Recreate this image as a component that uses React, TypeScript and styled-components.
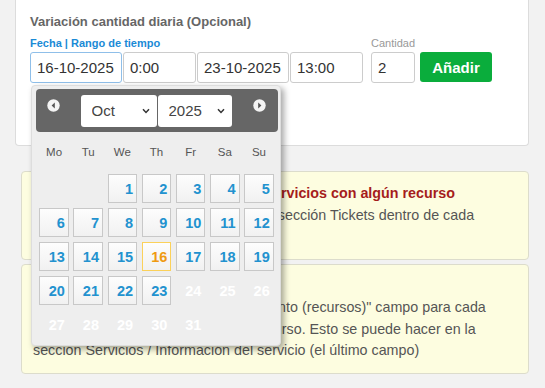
import React from 'react';
import styled, { createGlobalStyle } from 'styled-components';

const GlobalStyle = createGlobalStyle`
  html, body { margin: 0; padding: 0; background: #f2f2f2; }
  body {
    font-family: "Liberation Sans", Arial, sans-serif;
    width: 545px;
    height: 388px;
    overflow: hidden;
  }
  * { box-sizing: border-box; }
`;

const Page = styled.div`
  display: flex;
  flex-direction: column;
  padding: 0 16px 0 15px;
`;

const Panel = styled.section`
  position: relative;
  background: #fff;
  border: 1px solid #dcdcdc;
  border-top: none;
  border-radius: 0 0 4px 4px;
  padding: 12px 14px 62px 14px;
`;

const Title = styled.h3`
  margin: 0;
  font-size: 13px;
  line-height: 20px;
  font-weight: bold;
  color: #666;
`;

const FieldRow = styled.div`
  display: flex;
  align-items: flex-end;
  margin-top: 4px;
`;

const Group = styled.div<{ $gap?: number }>`
  display: flex;
  flex-direction: column;
  margin-left: ${(p) => p.$gap ?? 0}px;
`;

const Label = styled.label<{ $accent?: boolean }>`
  font-size: 11px;
  line-height: 14px;
  margin-bottom: 2px;
  font-weight: ${(p) => (p.$accent ? 'bold' : 'normal')};
  color: ${(p) => (p.$accent ? '#1a8ad6' : '#999')};
`;

const InputRow = styled.div`
  position: relative;
  display: flex;
  gap: 1px;
`;

const TextInput = styled.input<{ $w: number; $focus?: boolean }>`
  width: ${(p) => p.$w}px;
  height: 31px;
  border: 1px solid ${(p) => (p.$focus ? '#8fbfe9' : '#ccc')};
  border-radius: 3px;
  padding: 0 6px;
  font-family: "Liberation Sans", Arial, sans-serif;
  font-size: 15px;
  color: #333;
  background: #fff;
  outline: none;
`;

const AddButton = styled.button`
  margin-left: 5px;
  margin-bottom: 1px;
  width: 72px;
  height: 30px;
  border: none;
  border-radius: 3px;
  background: #0aad3c;
  color: #fff;
  font-family: "Liberation Sans", Arial, sans-serif;
  font-weight: bold;
  font-size: 15px;
`;

const Picker = styled.div`
  position: absolute;
  top: 33px;
  left: 1px;
  width: 250px;
  z-index: 10;
  background: #eee;
  border: 1px solid #ddd;
  border-radius: 4px;
  box-shadow: 3px 3px 6px rgba(0, 0, 0, 0.35);
  padding: 3px 2px 5.6px 4px;
`;

const PickerHeader = styled.div`
  height: 43px;
  background: #666;
  border-radius: 4px;
  display: flex;
  align-items: center;
  justify-content: space-between;
  padding: 0 12.5px 0 10.5px;
`;

const NavIcon = styled.svg`
  align-self: flex-start;
  margin-top: 10px;
  width: 13px;
  height: 13px;
`;

const Selects = styled.div`
  display: flex;
  gap: 1px;
`;

const SelectWrap = styled.div<{ $w: number }>`
  position: relative;
  width: ${(p) => p.$w}px;
  height: 32px;
`;

const Select = styled.select`
  appearance: none;
  -webkit-appearance: none;
  width: 100%;
  height: 100%;
  border: none;
  border-radius: 3px;
  background: #fff;
  padding: 0 0 0 11px;
  font-family: "Liberation Sans", Arial, sans-serif;
  font-size: 15px;
  color: #444;
  outline: none;
`;

const Chevron = styled.svg`
  position: absolute;
  right: 7px;
  top: 13px;
  width: 8px;
  height: 6px;
  pointer-events: none;
`;

const WeekRow = styled.div`
  display: grid;
  grid-template-columns: repeat(7, 29.5px);
  column-gap: 4.67px;
  margin-left: 3.3px;
  height: 40px;
  margin-bottom: 2px;
  align-items: center;
`;

const WeekDay = styled.span`
  text-align: center;
  font-size: 11.5px;
  color: #555;
`;

const DayGrid = styled.div`
  display: grid;
  grid-template-columns: repeat(7, 29.5px);
  grid-auto-rows: 29.4px;
  column-gap: 4.67px;
  row-gap: 4.6px;
  margin-left: 3.3px;
`;

type DayKind = 'normal' | 'today' | 'muted' | 'empty';

const Day = styled.span<{ $kind: DayKind }>`
  display: flex;
  align-items: center;
  justify-content: flex-end;
  padding-right: 3px;
  font-weight: bold;
  font-size: 14.5px;
  border: 1px solid
    ${(p) =>
      p.$kind === 'today' ? '#fbd15a' : p.$kind === 'normal' ? '#c8c8c8' : 'transparent'};
  background: ${(p) =>
    p.$kind === 'normal' || p.$kind === 'today'
      ? 'linear-gradient(#fdfdfd, #f1f1f1)'
      : 'transparent'};
  color: ${(p) =>
    p.$kind === 'today' ? '#ef9a12' : p.$kind === 'muted' ? '#fff' : '#2292cf'};
`;

const Notice = styled.div<{ $top: number }>`
  margin-left: 6px;
  margin-top: ${(p) => p.$top}px;
  background: #fdfde0;
  border: 1px solid #dcdccc;
  border-radius: 4px;
  padding: 11px;
  font-size: 14.3px;
  line-height: 21.5px;
  color: #555;
`;

const NoticeTitle = styled.strong`
  display: block;
  color: #a51c1c;
`;

const weekDays = ['Mo', 'Tu', 'We', 'Th', 'Fr', 'Sa', 'Su'];

function buildDays(): { label: string; kind: DayKind }[] {
  const cells: { label: string; kind: DayKind }[] = [];
  cells.push({ label: '', kind: 'empty' }, { label: '', kind: 'empty' });
  for (let d = 1; d <= 31; d++) {
    let kind: DayKind = 'normal';
    if (d === 16) kind = 'today';
    if (d > 23) kind = 'muted';
    cells.push({ label: String(d), kind });
  }
  return cells;
}

const PrevIcon = () => (
  <NavIcon viewBox="0 0 13 13">
    <circle cx="6.5" cy="6.5" r="6.2" fill="#f4f4f4" />
    <path d="M7.8 3.6 L4.6 6.5 L7.8 9.4 Z" fill="#555" />
  </NavIcon>
);

const NextIcon = () => (
  <NavIcon viewBox="0 0 13 13">
    <circle cx="6.5" cy="6.5" r="6.2" fill="#f4f4f4" />
    <path d="M5.2 3.6 L8.4 6.5 L5.2 9.4 Z" fill="#555" />
  </NavIcon>
);

const Caret = () => (
  <Chevron viewBox="0 0 8 6">
    <path d="M1 1.2 L4 4.4 L7 1.2" fill="none" stroke="#333" strokeWidth="1.5" />
  </Chevron>
);

export default function App() {
  const days = buildDays();
  return (
    <>
      <GlobalStyle />
      <Page>
        <Panel>
          <Title>Variación cantidad diaria (Opcional)</Title>
          <FieldRow>
            <Group>
              <Label $accent>Fecha | Rango de tiempo</Label>
              <InputRow>
                <TextInput $w={92} $focus defaultValue="16-10-2025" />
                <TextInput $w={73} defaultValue="0:00" />
                <TextInput $w={92} defaultValue="23-10-2025" />
                <TextInput $w={73} defaultValue="13:00" />
                <Picker>
                  <PickerHeader>
                    <PrevIcon />
                    <Selects>
                      <SelectWrap $w={76}>
                        <Select defaultValue="Oct">
                          <option>Oct</option>
                        </Select>
                        <Caret />
                      </SelectWrap>
                      <SelectWrap $w={74}>
                        <Select defaultValue="2025">
                          <option>2025</option>
                        </Select>
                        <Caret />
                      </SelectWrap>
                    </Selects>
                    <NextIcon />
                  </PickerHeader>
                  <WeekRow>
                    {weekDays.map((w) => (
                      <WeekDay key={w}>{w}</WeekDay>
                    ))}
                  </WeekRow>
                  <DayGrid>
                    {days.map((d, i) => (
                      <Day key={i} $kind={d.kind}>
                        {d.label}
                      </Day>
                    ))}
                  </DayGrid>
                </Picker>
              </InputRow>
            </Group>
            <Group $gap={8}>
              <Label>Cantidad</Label>
              <TextInput $w={44} defaultValue="2" />
            </Group>
            <AddButton>Añadir</AddButton>
          </FieldRow>
        </Panel>
        <Notice $top={25}>
          <NoticeTitle>La variación diaria no aplica a los servicios con algún recurso</NoticeTitle>
          En ellos la cantidad se configura en la sección Tickets dentro de cada
          <br />
          servicio.
        </Notice>
        <Notice $top={4}>
          <NoticeTitle>Importante</NoticeTitle>
          Debe completar el "Capacidad por evento (recursos)" campo para cada
          <br />
          servicio que tenga asignado algún recurso. Esto se puede hacer en la
          <br />
          sección Servicios / Información del servicio (el último campo)
        </Notice>
      </Page>
    </>
  );
}
